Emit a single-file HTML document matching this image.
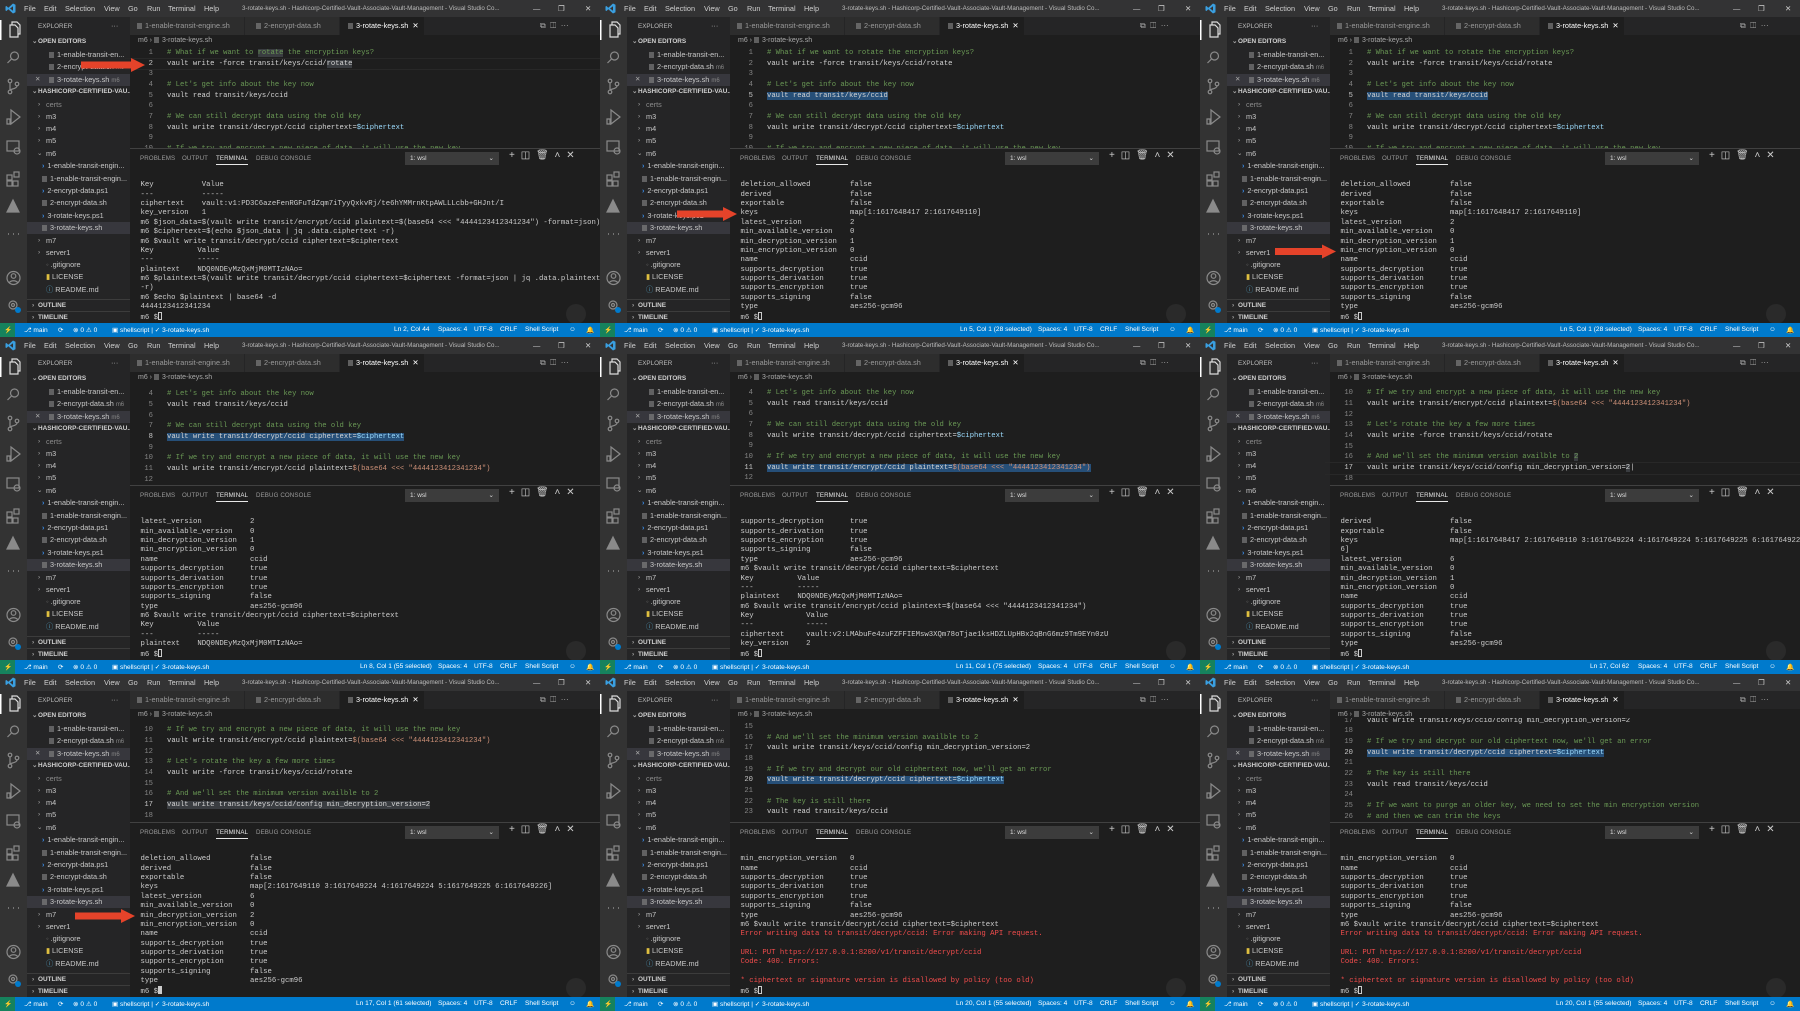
<!DOCTYPE html>
<html><head><meta charset="utf-8">
<style>
*{margin:0;padding:0;box-sizing:border-box}
body{width:1800px;height:1011px;background:#1e1e1e;overflow:hidden;position:relative;font-family:"Liberation Sans",sans-serif}
.p{position:absolute;width:600px;height:337px;overflow:hidden;background:#1e1e1e}
.p>*{position:absolute}
.tb{left:0;top:0;width:600px;height:17px;background:#333334;color:#cfcfcf;font-size:7.3px}
.tb span{position:absolute;top:4px;white-space:nowrap}
.tb .tt{left:242px;font-size:6.2px;top:5px;color:#bdbdbd}
.ab{left:0;top:17px;width:27px;height:306px;background:#333}
.sb{left:27px;top:17px;width:103px;height:306px;background:#252526}
.s{position:absolute;left:0;width:103px;height:12px;line-height:12px;font-size:7.3px;color:#c8c8c8;white-space:nowrap;overflow:hidden}
.s.h{font-size:6.4px;font-weight:bold;color:#d0d0d0}
.s.sel{background:#37373d}
.s .c{position:absolute;left:5px;color:#aaa;font-size:6.5px}
.fi{display:inline-block;width:5px;height:6px;background:#8a8a8a;opacity:.6;margin-right:3px;vertical-align:-1px}
.ps{color:#3b8eea;font-weight:bold;margin-right:3px;font-size:7px}
.tabs{left:130px;top:17px;width:470px;height:18px;background:#252526}
.tab{position:absolute;top:0;height:18px;line-height:18px;font-size:7.3px;color:#9a9a9a;background:#2d2d2d;white-space:nowrap;border-right:1px solid #252526}
.tab.a{background:#1e1e1e;color:#fff}
.bc{left:138px;top:37px;font-size:7px;color:#a9a9a9;white-space:nowrap}
.ed{left:125px;top:44px;width:475px;height:104px;overflow:hidden}
.ei{position:absolute;left:0;width:475px}
.l{position:relative;height:10.67px;line-height:10.67px;font-family:"Liberation Mono",monospace;font-size:7.2px;color:#d4d4d4}
.l i{position:absolute;left:0;width:28px;text-align:right;font-style:normal;color:#858585}
.l i.cur{color:#c6c6c6}
.l b{position:absolute;left:42px;font-weight:normal;white-space:pre}
.cm{color:#6a9955}.vr{color:#9cdcfe}.sr{color:#ce9178}
.hl{background:#264f78}.hs{background:#3a3d41}.hg{background:#3a3d41}
.pn{left:130px;top:148px;width:470px;height:175px;border-top:1px solid #414141;background:#1e1e1e}
.pt{position:absolute;top:6px;font-size:6.2px;color:#9a9a9a;letter-spacing:.1px}
.dd{position:absolute;left:275px;top:3px;width:94px;height:13px;background:#3c3c3c;font-size:6.5px;color:#ddd;line-height:13px;padding-left:5px}
.tm{left:140.5px;top:172px;font-family:"Liberation Mono",monospace;font-size:7.3px;color:#cccccc;white-space:pre;line-height:9.36px}
.er{color:#f14c4c}
.cu{display:inline-block;width:4px;height:8px;border:1px solid #ccc;vertical-align:-1px}
.st{left:0;top:323px;width:600px;height:14px;background:#007acc;color:#fff;font-size:6.6px}
.st span{position:absolute;top:3px;white-space:nowrap}
.st .rm{left:0;top:0;width:15px;height:14px;background:#16825d}
.arr{position:absolute;left:0;top:0}
</style></head><body>

<!-- PANEL 1 -->
<div class="p" style="left:0;top:0">
<div class="tb"><svg style="position:absolute;left:5px;top:3px" width="11" height="11" viewBox="0 0 11 11"><path d="M8 0.5L10.5 1.7V9.3L8 10.5L2.5 5.5L8 0.5ZM8 3.2L5 5.5L8 7.8Z M0.5 3.5L1.5 3L4 5.5L1.5 8L0.5 7.5Z" fill="#3a9fe0"/></svg><span style="left:24px">File</span><span style="left:44px">Edit</span><span style="left:65px">Selection</span><span style="left:104px">View</span><span style="left:128px">Go</span><span style="left:147px">Run</span><span style="left:168px">Terminal</span><span style="left:204px">Help</span><span class="tt">3-rotate-keys.sh - Hashicorp-Certified-Vault-Associate-Vault-Management - Visual Studio Co...</span><span style="left:533px">—</span><span style="left:558px">❐</span><span style="left:585px">✕</span></div>
<svg class="ab" width="27" height="306" viewBox="0 17 27 306" fill="none" stroke="#8a8a8a" stroke-width="1.2"><rect x="0" y="20" width="1.5" height="20" fill="#fff" stroke="none"/><path d="M10 25h5l3 3v9h-8z M12 25v-3h5l3 3v9h-2" stroke="#dcdcdc"/><circle cx="14.5" cy="56" r="4"/><path d="M11.5 59l-4 4"/><circle cx="10" cy="81" r="1.8"/><circle cx="10" cy="92" r="1.8"/><circle cx="17" cy="84" r="1.8"/><path d="M10 83v7M17 86c0 3-7 3-7 4"/><path d="M11 110l9 7-9 7z M7 119h3v5h-3z"/><rect x="7" y="141" width="12" height="10"/><circle cx="17" cy="151" r="3"/><rect x="7" y="175" width="5" height="5"/><rect x="7" y="181" width="5" height="5"/><rect x="13" y="181" width="5" height="5"/><rect x="14" y="172" width="5" height="5"/><path d="M7 212l6-12 6 12z" fill="#8a8a8a"/><path d="M8 234h1M13 234h1M18 234h1" stroke-width="1.6"/><circle cx="13.5" cy="278" r="6.5"/><circle cx="13.5" cy="276" r="2.3"/><path d="M9 283c2-3 7-3 9 0"/><circle cx="13" cy="305" r="4"/><circle cx="13" cy="305" r="1.5"/><circle cx="18" cy="310" r="3" fill="#007acc" stroke="none"/></svg>
<div class="sb">
<div class="s" style="top:4px;left:11px;font-size:6.3px;color:#bbb">EXPLORER</div><div class="s" style="top:3px;left:84px;width:20px;color:#bbb">···</div>
<div class="s h" style="top:19px"><span class="c">⌄</span><span style="margin-left:11px">OPEN EDITORS</span></div>
<div class="s" style="top:32px;padding-left:22px"><span class="fi"></span>1-enable-transit-en...</div>
<div class="s" style="top:44px;padding-left:22px"><span class="fi"></span>2-encrypt-data.sh <span style="color:#888;font-size:6px">m6</span></div>
<div class="s sel" style="top:57px;padding-left:22px"><span class="c" style="left:8px">✕</span><span class="fi"></span>3-rotate-keys.sh <span style="color:#888;font-size:6px">m6</span></div>
<div class="s h" style="top:69px"><span class="c">⌄</span><span style="margin-left:11px">HASHICORP-CERTIFIED-VAU...</span></div>
<div class="s" style="top:82px;padding-left:19px;color:#8b8b8b"><span class="c" style="left:11px">›</span>certs</div>
<div class="s" style="top:94px;padding-left:19px"><span class="c" style="left:11px">›</span>m3</div>
<div class="s" style="top:106px;padding-left:19px"><span class="c" style="left:11px">›</span>m4</div>
<div class="s" style="top:118px;padding-left:19px"><span class="c" style="left:11px">›</span>m5</div>
<div class="s" style="top:131px;padding-left:19px"><span class="c" style="left:10px">⌄</span>m6</div>
<div class="s" style="top:143px;padding-left:15px"><span class="ps">›</span>1-enable-transit-engin...</div>
<div class="s" style="top:156px;padding-left:15px"><span class="fi"></span>1-enable-transit-engin...</div>
<div class="s" style="top:168px;padding-left:15px"><span class="ps">›</span>2-encrypt-data.ps1</div>
<div class="s" style="top:180px;padding-left:15px"><span class="fi"></span>2-encrypt-data.sh</div>
<div class="s" style="top:193px;padding-left:15px"><span class="ps">›</span>3-rotate-keys.ps1</div>
<div class="s sel" style="top:205px;padding-left:15px"><span class="fi"></span>3-rotate-keys.sh</div>
<div class="s" style="top:218px;padding-left:19px"><span class="c" style="left:11px">›</span>m7</div>
<div class="s" style="top:230px;padding-left:19px"><span class="c" style="left:11px">›</span>server1</div>
<div class="s" style="top:242px;padding-left:19px"><span style="color:#666;margin-right:2px">◦</span>.gitignore</div>
<div class="s" style="top:254px;padding-left:19px"><span style="color:#e0c040;margin-right:2px">▮</span>LICENSE</div>
<div class="s" style="top:267px;padding-left:19px"><span style="color:#519aba;margin-right:2px">ⓘ</span>README.md</div>
<div class="s h" style="top:282px;border-top:1px solid #3c3c3c"><span class="c">›</span><span style="margin-left:11px">OUTLINE</span></div>
<div class="s h" style="top:294px;border-top:1px solid #3c3c3c"><span class="c">›</span><span style="margin-left:11px">TIMELINE</span></div>
</div>
<div class="tabs"><div class="tab" style="left:0;width:115px;padding-left:7px"><span class="fi"></span>1-enable-transit-engine.sh</div><div class="tab" style="left:115px;width:95px;padding-left:11px"><span class="fi"></span>2-encrypt-data.sh</div><div class="tab a" style="left:210px;width:85px;padding-left:8px"><span class="fi"></span>3-rotate-keys.sh <span style="margin-left:2px">✕</span></div><div class="tab" style="left:410px;background:none;color:#aaa;font-size:8px">⧉ &nbsp;◫ &nbsp;···</div></div>
<div class="bc">m6 › <span class="fi"></span>3-rotate-keys.sh</div>
<div class="ed"><div class="ei" style="top:4px">
<div class="l"><i>1</i><b class="cm"># What if we want to <span class="hs">rotate</span> the encryption keys?</b></div>
<div class="l" style="outline:1px solid #282828"><i class="cur">2</i><b>vault write -force transit/keys/ccid/<span class="hs">rotate</span></b></div>
<div class="l"><i>3</i><b></b></div>
<div class="l"><i>4</i><b class="cm"># Let's get info about the key now</b></div>
<div class="l"><i>5</i><b>vault read transit/keys/ccid</b></div>
<div class="l"><i>6</i><b></b></div>
<div class="l"><i>7</i><b class="cm"># We can still decrypt data using the old key</b></div>
<div class="l"><i>8</i><b>vault write transit/decrypt/ccid ciphertext=<span class="vr">$ciphertext</span></b></div>
<div class="l"><i>9</i><b></b></div>
<div class="l"><i>10</i><b class="cm"># If we try and encrypt a new piece of data, it will use the new key</b></div>
</div></div>
<div class="pn"><span class="pt" style="left:10px">PROBLEMS</span><span class="pt" style="left:52px">OUTPUT</span><span class="pt" style="left:86px;color:#e7e7e7;border-bottom:1px solid #e7e7e7;padding-bottom:2px">TERMINAL</span><span class="pt" style="left:126px">DEBUG CONSOLE</span><div class="dd">1: wsl<span style="position:absolute;right:5px">⌄</span></div><span class="pt" style="left:379px;font-size:10px;top:1px;color:#ccc">+ &nbsp;◫ &nbsp;🗑 &nbsp;˄ &nbsp;✕</span></div>
<div class="tm">
Key           Value
---           -----
ciphertext    vault:v1:PD3C6azeFenRGFuTdZqm7iTyyQxkvRj/te6hYMMrnKtpAWLLLcbb+GHJnt/I
key_version   1
m6 $json_data=$(vault write transit/encrypt/ccid plaintext=$(base64 &lt;&lt;&lt; "4444123412341234") -format=json)
m6 $ciphertext=$(echo $json_data | jq .data.ciphertext -r)
m6 $vault write transit/decrypt/ccid ciphertext=$ciphertext
Key          Value
---          -----
plaintext    NDQ0NDEyMzQxMjM0MTIzNAo=
m6 $plaintext=$(vault write transit/decrypt/ccid ciphertext=$ciphertext -format=json | jq .data.plaintext
-r)
m6 $echo $plaintext | base64 -d
4444123412341234
m6 $<span class="cu"></span></div>
<svg class="arr" width="600" height="337"><circle cx="576" cy="314" r="10" fill="#2a2a2a"/><polygon points="81,61.5 131,61.5 131,58 145,65 131,72 131,68.5 81,68.5" fill="#e5432a"/></svg>
<div class="st"><div class="rm" style="position:absolute"></div><span style="left:4px">⚡</span><span style="left:24px">⎇ main</span><span style="left:58px">⟳</span><span style="left:73px">⊗ 0 ⚠ 0</span><span style="left:112px">▣ shellscript | ✓ 3-rotate-keys.sh</span><span style="left:394px">Ln 2, Col 44</span><span style="left:438px">Spaces: 4</span><span style="left:474px">UTF-8</span><span style="left:500px">CRLF</span><span style="left:525px">Shell Script</span><span style="left:569px">☺</span><span style="left:586px">🔔</span></div>
</div>

<!-- PANEL 2 -->
<div class="p" style="left:600px;top:0">
<div class="tb"><svg style="position:absolute;left:5px;top:3px" width="11" height="11" viewBox="0 0 11 11"><path d="M8 0.5L10.5 1.7V9.3L8 10.5L2.5 5.5L8 0.5ZM8 3.2L5 5.5L8 7.8Z M0.5 3.5L1.5 3L4 5.5L1.5 8L0.5 7.5Z" fill="#3a9fe0"/></svg><span style="left:24px">File</span><span style="left:44px">Edit</span><span style="left:65px">Selection</span><span style="left:104px">View</span><span style="left:128px">Go</span><span style="left:147px">Run</span><span style="left:168px">Terminal</span><span style="left:204px">Help</span><span class="tt">3-rotate-keys.sh - Hashicorp-Certified-Vault-Associate-Vault-Management - Visual Studio Co...</span><span style="left:533px">—</span><span style="left:558px">❐</span><span style="left:585px">✕</span></div>
<svg class="ab" width="27" height="306" viewBox="0 17 27 306" fill="none" stroke="#8a8a8a" stroke-width="1.2"><rect x="0" y="20" width="1.5" height="20" fill="#fff" stroke="none"/><path d="M10 25h5l3 3v9h-8z M12 25v-3h5l3 3v9h-2" stroke="#dcdcdc"/><circle cx="14.5" cy="56" r="4"/><path d="M11.5 59l-4 4"/><circle cx="10" cy="81" r="1.8"/><circle cx="10" cy="92" r="1.8"/><circle cx="17" cy="84" r="1.8"/><path d="M10 83v7M17 86c0 3-7 3-7 4"/><path d="M11 110l9 7-9 7z M7 119h3v5h-3z"/><rect x="7" y="141" width="12" height="10"/><circle cx="17" cy="151" r="3"/><rect x="7" y="175" width="5" height="5"/><rect x="7" y="181" width="5" height="5"/><rect x="13" y="181" width="5" height="5"/><rect x="14" y="172" width="5" height="5"/><path d="M7 212l6-12 6 12z" fill="#8a8a8a"/><path d="M8 234h1M13 234h1M18 234h1" stroke-width="1.6"/><circle cx="13.5" cy="278" r="6.5"/><circle cx="13.5" cy="276" r="2.3"/><path d="M9 283c2-3 7-3 9 0"/><circle cx="13" cy="305" r="4"/><circle cx="13" cy="305" r="1.5"/><circle cx="18" cy="310" r="3" fill="#007acc" stroke="none"/></svg>
<div class="sb">
<div class="s" style="top:4px;left:11px;font-size:6.3px;color:#bbb">EXPLORER</div><div class="s" style="top:3px;left:84px;width:20px;color:#bbb">···</div>
<div class="s h" style="top:19px"><span class="c">⌄</span><span style="margin-left:11px">OPEN EDITORS</span></div>
<div class="s" style="top:32px;padding-left:22px"><span class="fi"></span>1-enable-transit-en...</div>
<div class="s" style="top:44px;padding-left:22px"><span class="fi"></span>2-encrypt-data.sh <span style="color:#888;font-size:6px">m6</span></div>
<div class="s sel" style="top:57px;padding-left:22px"><span class="c" style="left:8px">✕</span><span class="fi"></span>3-rotate-keys.sh <span style="color:#888;font-size:6px">m6</span></div>
<div class="s h" style="top:69px"><span class="c">⌄</span><span style="margin-left:11px">HASHICORP-CERTIFIED-VAU...</span></div>
<div class="s" style="top:82px;padding-left:19px;color:#8b8b8b"><span class="c" style="left:11px">›</span>certs</div>
<div class="s" style="top:94px;padding-left:19px"><span class="c" style="left:11px">›</span>m3</div>
<div class="s" style="top:106px;padding-left:19px"><span class="c" style="left:11px">›</span>m4</div>
<div class="s" style="top:118px;padding-left:19px"><span class="c" style="left:11px">›</span>m5</div>
<div class="s" style="top:131px;padding-left:19px"><span class="c" style="left:10px">⌄</span>m6</div>
<div class="s" style="top:143px;padding-left:15px"><span class="ps">›</span>1-enable-transit-engin...</div>
<div class="s" style="top:156px;padding-left:15px"><span class="fi"></span>1-enable-transit-engin...</div>
<div class="s" style="top:168px;padding-left:15px"><span class="ps">›</span>2-encrypt-data.ps1</div>
<div class="s" style="top:180px;padding-left:15px"><span class="fi"></span>2-encrypt-data.sh</div>
<div class="s" style="top:193px;padding-left:15px"><span class="ps">›</span>3-rotate-keys.ps1</div>
<div class="s sel" style="top:205px;padding-left:15px"><span class="fi"></span>3-rotate-keys.sh</div>
<div class="s" style="top:218px;padding-left:19px"><span class="c" style="left:11px">›</span>m7</div>
<div class="s" style="top:230px;padding-left:19px"><span class="c" style="left:11px">›</span>server1</div>
<div class="s" style="top:242px;padding-left:19px"><span style="color:#666;margin-right:2px">◦</span>.gitignore</div>
<div class="s" style="top:254px;padding-left:19px"><span style="color:#e0c040;margin-right:2px">▮</span>LICENSE</div>
<div class="s" style="top:267px;padding-left:19px"><span style="color:#519aba;margin-right:2px">ⓘ</span>README.md</div>
<div class="s h" style="top:282px;border-top:1px solid #3c3c3c"><span class="c">›</span><span style="margin-left:11px">OUTLINE</span></div>
<div class="s h" style="top:294px;border-top:1px solid #3c3c3c"><span class="c">›</span><span style="margin-left:11px">TIMELINE</span></div>
</div>
<div class="tabs"><div class="tab" style="left:0;width:115px;padding-left:7px"><span class="fi"></span>1-enable-transit-engine.sh</div><div class="tab" style="left:115px;width:95px;padding-left:11px"><span class="fi"></span>2-encrypt-data.sh</div><div class="tab a" style="left:210px;width:85px;padding-left:8px"><span class="fi"></span>3-rotate-keys.sh <span style="margin-left:2px">✕</span></div><div class="tab" style="left:410px;background:none;color:#aaa;font-size:8px">⧉ &nbsp;◫ &nbsp;···</div></div>
<div class="bc">m6 › <span class="fi"></span>3-rotate-keys.sh</div>
<div class="ed"><div class="ei" style="top:4px">
<div class="l"><i>1</i><b class="cm"># What if we want to rotate the encryption keys?</b></div>
<div class="l"><i>2</i><b>vault write -force transit/keys/ccid/rotate</b></div>
<div class="l"><i>3</i><b></b></div>
<div class="l"><i>4</i><b class="cm"># Let's get info about the key now</b></div>
<div class="l"><i class="cur">5</i><b><span class="hl">vault read transit/keys/ccid</span></b></div>
<div class="l"><i>6</i><b></b></div>
<div class="l"><i>7</i><b class="cm"># We can still decrypt data using the old key</b></div>
<div class="l"><i>8</i><b>vault write transit/decrypt/ccid ciphertext=<span class="vr">$ciphertext</span></b></div>
<div class="l"><i>9</i><b></b></div>
<div class="l"><i>10</i><b class="cm"># If we try and encrypt a new piece of data, it will use the new key</b></div>
</div></div>
<div class="pn"><span class="pt" style="left:10px">PROBLEMS</span><span class="pt" style="left:52px">OUTPUT</span><span class="pt" style="left:86px;color:#e7e7e7;border-bottom:1px solid #e7e7e7;padding-bottom:2px">TERMINAL</span><span class="pt" style="left:126px">DEBUG CONSOLE</span><div class="dd">1: wsl<span style="position:absolute;right:5px">⌄</span></div><span class="pt" style="left:379px;font-size:10px;top:1px;color:#ccc">+ &nbsp;◫ &nbsp;🗑 &nbsp;˄ &nbsp;✕</span></div>
<div class="tm">
deletion_allowed         false
derived                  false
exportable               false
keys                     map[1:1617648417 2:1617649110]
latest_version           2
min_available_version    0
min_decryption_version   1
min_encryption_version   0
name                     ccid
supports_decryption      true
supports_derivation      true
supports_encryption      true
supports_signing         false
type                     aes256-gcm96
m6 $<span class="cu"></span></div>
<svg class="arr" width="600" height="337"><circle cx="576" cy="314" r="10" fill="#2a2a2a"/><polygon points="77,210.5 123,210.5 123,207 137,214 123,221 123,217.5 77,217.5" fill="#e5432a"/></svg>
<div class="st"><div class="rm" style="position:absolute"></div><span style="left:4px">⚡</span><span style="left:24px">⎇ main</span><span style="left:58px">⟳</span><span style="left:73px">⊗ 0 ⚠ 0</span><span style="left:112px">▣ shellscript | ✓ 3-rotate-keys.sh</span><span style="left:360px">Ln 5, Col 1 (28 selected)</span><span style="left:438px">Spaces: 4</span><span style="left:474px">UTF-8</span><span style="left:500px">CRLF</span><span style="left:525px">Shell Script</span><span style="left:569px">☺</span><span style="left:586px">🔔</span></div>
</div>

<!-- PANEL 3 -->
<div class="p" style="left:1200px;top:0">
<div class="tb"><svg style="position:absolute;left:5px;top:3px" width="11" height="11" viewBox="0 0 11 11"><path d="M8 0.5L10.5 1.7V9.3L8 10.5L2.5 5.5L8 0.5ZM8 3.2L5 5.5L8 7.8Z M0.5 3.5L1.5 3L4 5.5L1.5 8L0.5 7.5Z" fill="#3a9fe0"/></svg><span style="left:24px">File</span><span style="left:44px">Edit</span><span style="left:65px">Selection</span><span style="left:104px">View</span><span style="left:128px">Go</span><span style="left:147px">Run</span><span style="left:168px">Terminal</span><span style="left:204px">Help</span><span class="tt">3-rotate-keys.sh - Hashicorp-Certified-Vault-Associate-Vault-Management - Visual Studio Co...</span><span style="left:533px">—</span><span style="left:558px">❐</span><span style="left:585px">✕</span></div>
<svg class="ab" width="27" height="306" viewBox="0 17 27 306" fill="none" stroke="#8a8a8a" stroke-width="1.2"><rect x="0" y="20" width="1.5" height="20" fill="#fff" stroke="none"/><path d="M10 25h5l3 3v9h-8z M12 25v-3h5l3 3v9h-2" stroke="#dcdcdc"/><circle cx="14.5" cy="56" r="4"/><path d="M11.5 59l-4 4"/><circle cx="10" cy="81" r="1.8"/><circle cx="10" cy="92" r="1.8"/><circle cx="17" cy="84" r="1.8"/><path d="M10 83v7M17 86c0 3-7 3-7 4"/><path d="M11 110l9 7-9 7z M7 119h3v5h-3z"/><rect x="7" y="141" width="12" height="10"/><circle cx="17" cy="151" r="3"/><rect x="7" y="175" width="5" height="5"/><rect x="7" y="181" width="5" height="5"/><rect x="13" y="181" width="5" height="5"/><rect x="14" y="172" width="5" height="5"/><path d="M7 212l6-12 6 12z" fill="#8a8a8a"/><path d="M8 234h1M13 234h1M18 234h1" stroke-width="1.6"/><circle cx="13.5" cy="278" r="6.5"/><circle cx="13.5" cy="276" r="2.3"/><path d="M9 283c2-3 7-3 9 0"/><circle cx="13" cy="305" r="4"/><circle cx="13" cy="305" r="1.5"/><circle cx="18" cy="310" r="3" fill="#007acc" stroke="none"/></svg>
<div class="sb">
<div class="s" style="top:4px;left:11px;font-size:6.3px;color:#bbb">EXPLORER</div><div class="s" style="top:3px;left:84px;width:20px;color:#bbb">···</div>
<div class="s h" style="top:19px"><span class="c">⌄</span><span style="margin-left:11px">OPEN EDITORS</span></div>
<div class="s" style="top:32px;padding-left:22px"><span class="fi"></span>1-enable-transit-en...</div>
<div class="s" style="top:44px;padding-left:22px"><span class="fi"></span>2-encrypt-data.sh <span style="color:#888;font-size:6px">m6</span></div>
<div class="s sel" style="top:57px;padding-left:22px"><span class="c" style="left:8px">✕</span><span class="fi"></span>3-rotate-keys.sh <span style="color:#888;font-size:6px">m6</span></div>
<div class="s h" style="top:69px"><span class="c">⌄</span><span style="margin-left:11px">HASHICORP-CERTIFIED-VAU...</span></div>
<div class="s" style="top:82px;padding-left:19px;color:#8b8b8b"><span class="c" style="left:11px">›</span>certs</div>
<div class="s" style="top:94px;padding-left:19px"><span class="c" style="left:11px">›</span>m3</div>
<div class="s" style="top:106px;padding-left:19px"><span class="c" style="left:11px">›</span>m4</div>
<div class="s" style="top:118px;padding-left:19px"><span class="c" style="left:11px">›</span>m5</div>
<div class="s" style="top:131px;padding-left:19px"><span class="c" style="left:10px">⌄</span>m6</div>
<div class="s" style="top:143px;padding-left:15px"><span class="ps">›</span>1-enable-transit-engin...</div>
<div class="s" style="top:156px;padding-left:15px"><span class="fi"></span>1-enable-transit-engin...</div>
<div class="s" style="top:168px;padding-left:15px"><span class="ps">›</span>2-encrypt-data.ps1</div>
<div class="s" style="top:180px;padding-left:15px"><span class="fi"></span>2-encrypt-data.sh</div>
<div class="s" style="top:193px;padding-left:15px"><span class="ps">›</span>3-rotate-keys.ps1</div>
<div class="s sel" style="top:205px;padding-left:15px"><span class="fi"></span>3-rotate-keys.sh</div>
<div class="s" style="top:218px;padding-left:19px"><span class="c" style="left:11px">›</span>m7</div>
<div class="s" style="top:230px;padding-left:19px"><span class="c" style="left:11px">›</span>server1</div>
<div class="s" style="top:242px;padding-left:19px"><span style="color:#666;margin-right:2px">◦</span>.gitignore</div>
<div class="s" style="top:254px;padding-left:19px"><span style="color:#e0c040;margin-right:2px">▮</span>LICENSE</div>
<div class="s" style="top:267px;padding-left:19px"><span style="color:#519aba;margin-right:2px">ⓘ</span>README.md</div>
<div class="s h" style="top:282px;border-top:1px solid #3c3c3c"><span class="c">›</span><span style="margin-left:11px">OUTLINE</span></div>
<div class="s h" style="top:294px;border-top:1px solid #3c3c3c"><span class="c">›</span><span style="margin-left:11px">TIMELINE</span></div>
</div>
<div class="tabs"><div class="tab" style="left:0;width:115px;padding-left:7px"><span class="fi"></span>1-enable-transit-engine.sh</div><div class="tab" style="left:115px;width:95px;padding-left:11px"><span class="fi"></span>2-encrypt-data.sh</div><div class="tab a" style="left:210px;width:85px;padding-left:8px"><span class="fi"></span>3-rotate-keys.sh <span style="margin-left:2px">✕</span></div><div class="tab" style="left:410px;background:none;color:#aaa;font-size:8px">⧉ &nbsp;◫ &nbsp;···</div></div>
<div class="bc">m6 › <span class="fi"></span>3-rotate-keys.sh</div>
<div class="ed"><div class="ei" style="top:4px">
<div class="l"><i>1</i><b class="cm"># What if we want to rotate the encryption keys?</b></div>
<div class="l"><i>2</i><b>vault write -force transit/keys/ccid/rotate</b></div>
<div class="l"><i>3</i><b></b></div>
<div class="l"><i>4</i><b class="cm"># Let's get info about the key now</b></div>
<div class="l"><i class="cur">5</i><b><span class="hl">vault read transit/keys/ccid</span></b></div>
<div class="l"><i>6</i><b></b></div>
<div class="l"><i>7</i><b class="cm"># We can still decrypt data using the old key</b></div>
<div class="l"><i>8</i><b>vault write transit/decrypt/ccid ciphertext=<span class="vr">$ciphertext</span></b></div>
<div class="l"><i>9</i><b></b></div>
<div class="l"><i>10</i><b class="cm"># If we try and encrypt a new piece of data, it will use the new key</b></div>
</div></div>
<div class="pn"><span class="pt" style="left:10px">PROBLEMS</span><span class="pt" style="left:52px">OUTPUT</span><span class="pt" style="left:86px;color:#e7e7e7;border-bottom:1px solid #e7e7e7;padding-bottom:2px">TERMINAL</span><span class="pt" style="left:126px">DEBUG CONSOLE</span><div class="dd">1: wsl<span style="position:absolute;right:5px">⌄</span></div><span class="pt" style="left:379px;font-size:10px;top:1px;color:#ccc">+ &nbsp;◫ &nbsp;🗑 &nbsp;˄ &nbsp;✕</span></div>
<div class="tm">
deletion_allowed         false
derived                  false
exportable               false
keys                     map[1:1617648417 2:1617649110]
latest_version           2
min_available_version    0
min_decryption_version   1
min_encryption_version   0
name                     ccid
supports_decryption      true
supports_derivation      true
supports_encryption      true
supports_signing         false
type                     aes256-gcm96
m6 $<span class="cu"></span></div>
<svg class="arr" width="600" height="337"><circle cx="576" cy="314" r="10" fill="#2a2a2a"/><polygon points="75,248 122,248 122,244.5 136,251.5 122,258.5 122,255 75,255" fill="#e5432a"/></svg>
<div class="st"><div class="rm" style="position:absolute"></div><span style="left:4px">⚡</span><span style="left:24px">⎇ main</span><span style="left:58px">⟳</span><span style="left:73px">⊗ 0 ⚠ 0</span><span style="left:112px">▣ shellscript | ✓ 3-rotate-keys.sh</span><span style="left:360px">Ln 5, Col 1 (28 selected)</span><span style="left:438px">Spaces: 4</span><span style="left:474px">UTF-8</span><span style="left:500px">CRLF</span><span style="left:525px">Shell Script</span><span style="left:569px">☺</span><span style="left:586px">🔔</span></div>
</div>

<!-- PANEL 4 -->
<div class="p" style="left:0;top:337px">
<div class="tb"><svg style="position:absolute;left:5px;top:3px" width="11" height="11" viewBox="0 0 11 11"><path d="M8 0.5L10.5 1.7V9.3L8 10.5L2.5 5.5L8 0.5ZM8 3.2L5 5.5L8 7.8Z M0.5 3.5L1.5 3L4 5.5L1.5 8L0.5 7.5Z" fill="#3a9fe0"/></svg><span style="left:24px">File</span><span style="left:44px">Edit</span><span style="left:65px">Selection</span><span style="left:104px">View</span><span style="left:128px">Go</span><span style="left:147px">Run</span><span style="left:168px">Terminal</span><span style="left:204px">Help</span><span class="tt">3-rotate-keys.sh - Hashicorp-Certified-Vault-Associate-Vault-Management - Visual Studio Co...</span><span style="left:533px">—</span><span style="left:558px">❐</span><span style="left:585px">✕</span></div>
<svg class="ab" width="27" height="306" viewBox="0 17 27 306" fill="none" stroke="#8a8a8a" stroke-width="1.2"><rect x="0" y="20" width="1.5" height="20" fill="#fff" stroke="none"/><path d="M10 25h5l3 3v9h-8z M12 25v-3h5l3 3v9h-2" stroke="#dcdcdc"/><circle cx="14.5" cy="56" r="4"/><path d="M11.5 59l-4 4"/><circle cx="10" cy="81" r="1.8"/><circle cx="10" cy="92" r="1.8"/><circle cx="17" cy="84" r="1.8"/><path d="M10 83v7M17 86c0 3-7 3-7 4"/><path d="M11 110l9 7-9 7z M7 119h3v5h-3z"/><rect x="7" y="141" width="12" height="10"/><circle cx="17" cy="151" r="3"/><rect x="7" y="175" width="5" height="5"/><rect x="7" y="181" width="5" height="5"/><rect x="13" y="181" width="5" height="5"/><rect x="14" y="172" width="5" height="5"/><path d="M7 212l6-12 6 12z" fill="#8a8a8a"/><path d="M8 234h1M13 234h1M18 234h1" stroke-width="1.6"/><circle cx="13.5" cy="278" r="6.5"/><circle cx="13.5" cy="276" r="2.3"/><path d="M9 283c2-3 7-3 9 0"/><circle cx="13" cy="305" r="4"/><circle cx="13" cy="305" r="1.5"/><circle cx="18" cy="310" r="3" fill="#007acc" stroke="none"/></svg>
<div class="sb">
<div class="s" style="top:4px;left:11px;font-size:6.3px;color:#bbb">EXPLORER</div><div class="s" style="top:3px;left:84px;width:20px;color:#bbb">···</div>
<div class="s h" style="top:19px"><span class="c">⌄</span><span style="margin-left:11px">OPEN EDITORS</span></div>
<div class="s" style="top:32px;padding-left:22px"><span class="fi"></span>1-enable-transit-en...</div>
<div class="s" style="top:44px;padding-left:22px"><span class="fi"></span>2-encrypt-data.sh <span style="color:#888;font-size:6px">m6</span></div>
<div class="s sel" style="top:57px;padding-left:22px"><span class="c" style="left:8px">✕</span><span class="fi"></span>3-rotate-keys.sh <span style="color:#888;font-size:6px">m6</span></div>
<div class="s h" style="top:69px"><span class="c">⌄</span><span style="margin-left:11px">HASHICORP-CERTIFIED-VAU...</span></div>
<div class="s" style="top:82px;padding-left:19px;color:#8b8b8b"><span class="c" style="left:11px">›</span>certs</div>
<div class="s" style="top:94px;padding-left:19px"><span class="c" style="left:11px">›</span>m3</div>
<div class="s" style="top:106px;padding-left:19px"><span class="c" style="left:11px">›</span>m4</div>
<div class="s" style="top:118px;padding-left:19px"><span class="c" style="left:11px">›</span>m5</div>
<div class="s" style="top:131px;padding-left:19px"><span class="c" style="left:10px">⌄</span>m6</div>
<div class="s" style="top:143px;padding-left:15px"><span class="ps">›</span>1-enable-transit-engin...</div>
<div class="s" style="top:156px;padding-left:15px"><span class="fi"></span>1-enable-transit-engin...</div>
<div class="s" style="top:168px;padding-left:15px"><span class="ps">›</span>2-encrypt-data.ps1</div>
<div class="s" style="top:180px;padding-left:15px"><span class="fi"></span>2-encrypt-data.sh</div>
<div class="s" style="top:193px;padding-left:15px"><span class="ps">›</span>3-rotate-keys.ps1</div>
<div class="s sel" style="top:205px;padding-left:15px"><span class="fi"></span>3-rotate-keys.sh</div>
<div class="s" style="top:218px;padding-left:19px"><span class="c" style="left:11px">›</span>m7</div>
<div class="s" style="top:230px;padding-left:19px"><span class="c" style="left:11px">›</span>server1</div>
<div class="s" style="top:242px;padding-left:19px"><span style="color:#666;margin-right:2px">◦</span>.gitignore</div>
<div class="s" style="top:254px;padding-left:19px"><span style="color:#e0c040;margin-right:2px">▮</span>LICENSE</div>
<div class="s" style="top:267px;padding-left:19px"><span style="color:#519aba;margin-right:2px">ⓘ</span>README.md</div>
<div class="s h" style="top:282px;border-top:1px solid #3c3c3c"><span class="c">›</span><span style="margin-left:11px">OUTLINE</span></div>
<div class="s h" style="top:294px;border-top:1px solid #3c3c3c"><span class="c">›</span><span style="margin-left:11px">TIMELINE</span></div>
</div>
<div class="tabs"><div class="tab" style="left:0;width:115px;padding-left:7px"><span class="fi"></span>1-enable-transit-engine.sh</div><div class="tab" style="left:115px;width:95px;padding-left:11px"><span class="fi"></span>2-encrypt-data.sh</div><div class="tab a" style="left:210px;width:85px;padding-left:8px"><span class="fi"></span>3-rotate-keys.sh <span style="margin-left:2px">✕</span></div><div class="tab" style="left:410px;background:none;color:#aaa;font-size:8px">⧉ &nbsp;◫ &nbsp;···</div></div>
<div class="bc">m6 › <span class="fi"></span>3-rotate-keys.sh</div>
<div class="ed"><div class="ei" style="top:8.4px">
<div class="l"><i>4</i><b class="cm"># Let's get info about the key now</b></div>
<div class="l"><i>5</i><b>vault read transit/keys/ccid</b></div>
<div class="l"><i>6</i><b></b></div>
<div class="l"><i>7</i><b class="cm"># We can still decrypt data using the old key</b></div>
<div class="l"><i class="cur">8</i><b><span class="hl">vault write transit/decrypt/ccid ciphertext=<span class="vr">$ciphertext</span></span></b></div>
<div class="l"><i>9</i><b></b></div>
<div class="l"><i>10</i><b class="cm"># If we try and encrypt a new piece of data, it will use the new key</b></div>
<div class="l"><i>11</i><b>vault write transit/encrypt/ccid plaintext=<span class="sr">$(base64 &lt;&lt;&lt; "4444123412341234")</span></b></div>
<div class="l"><i>12</i><b></b></div>
</div></div>
<div class="pn"><span class="pt" style="left:10px">PROBLEMS</span><span class="pt" style="left:52px">OUTPUT</span><span class="pt" style="left:86px;color:#e7e7e7;border-bottom:1px solid #e7e7e7;padding-bottom:2px">TERMINAL</span><span class="pt" style="left:126px">DEBUG CONSOLE</span><div class="dd">1: wsl<span style="position:absolute;right:5px">⌄</span></div><span class="pt" style="left:379px;font-size:10px;top:1px;color:#ccc">+ &nbsp;◫ &nbsp;🗑 &nbsp;˄ &nbsp;✕</span></div>
<div class="tm">
latest_version           2
min_available_version    0
min_decryption_version   1
min_encryption_version   0
name                     ccid
supports_decryption      true
supports_derivation      true
supports_encryption      true
supports_signing         false
type                     aes256-gcm96
m6 $vault write transit/decrypt/ccid ciphertext=$ciphertext
Key          Value
---          -----
plaintext    NDQ0NDEyMzQxMjM0MTIzNAo=
m6 $<span class="cu"></span></div>
<svg class="arr" width="600" height="337"><circle cx="576" cy="314" r="10" fill="#2a2a2a"/></svg>
<div class="st"><div class="rm" style="position:absolute"></div><span style="left:4px">⚡</span><span style="left:24px">⎇ main</span><span style="left:58px">⟳</span><span style="left:73px">⊗ 0 ⚠ 0</span><span style="left:112px">▣ shellscript | ✓ 3-rotate-keys.sh</span><span style="left:360px">Ln 8, Col 1 (55 selected)</span><span style="left:438px">Spaces: 4</span><span style="left:474px">UTF-8</span><span style="left:500px">CRLF</span><span style="left:525px">Shell Script</span><span style="left:569px">☺</span><span style="left:586px">🔔</span></div>
</div>

<!-- PANEL 5 -->
<div class="p" style="left:600px;top:337px">
<div class="tb"><svg style="position:absolute;left:5px;top:3px" width="11" height="11" viewBox="0 0 11 11"><path d="M8 0.5L10.5 1.7V9.3L8 10.5L2.5 5.5L8 0.5ZM8 3.2L5 5.5L8 7.8Z M0.5 3.5L1.5 3L4 5.5L1.5 8L0.5 7.5Z" fill="#3a9fe0"/></svg><span style="left:24px">File</span><span style="left:44px">Edit</span><span style="left:65px">Selection</span><span style="left:104px">View</span><span style="left:128px">Go</span><span style="left:147px">Run</span><span style="left:168px">Terminal</span><span style="left:204px">Help</span><span class="tt">3-rotate-keys.sh - Hashicorp-Certified-Vault-Associate-Vault-Management - Visual Studio Co...</span><span style="left:533px">—</span><span style="left:558px">❐</span><span style="left:585px">✕</span></div>
<svg class="ab" width="27" height="306" viewBox="0 17 27 306" fill="none" stroke="#8a8a8a" stroke-width="1.2"><rect x="0" y="20" width="1.5" height="20" fill="#fff" stroke="none"/><path d="M10 25h5l3 3v9h-8z M12 25v-3h5l3 3v9h-2" stroke="#dcdcdc"/><circle cx="14.5" cy="56" r="4"/><path d="M11.5 59l-4 4"/><circle cx="10" cy="81" r="1.8"/><circle cx="10" cy="92" r="1.8"/><circle cx="17" cy="84" r="1.8"/><path d="M10 83v7M17 86c0 3-7 3-7 4"/><path d="M11 110l9 7-9 7z M7 119h3v5h-3z"/><rect x="7" y="141" width="12" height="10"/><circle cx="17" cy="151" r="3"/><rect x="7" y="175" width="5" height="5"/><rect x="7" y="181" width="5" height="5"/><rect x="13" y="181" width="5" height="5"/><rect x="14" y="172" width="5" height="5"/><path d="M7 212l6-12 6 12z" fill="#8a8a8a"/><path d="M8 234h1M13 234h1M18 234h1" stroke-width="1.6"/><circle cx="13.5" cy="278" r="6.5"/><circle cx="13.5" cy="276" r="2.3"/><path d="M9 283c2-3 7-3 9 0"/><circle cx="13" cy="305" r="4"/><circle cx="13" cy="305" r="1.5"/><circle cx="18" cy="310" r="3" fill="#007acc" stroke="none"/></svg>
<div class="sb">
<div class="s" style="top:4px;left:11px;font-size:6.3px;color:#bbb">EXPLORER</div><div class="s" style="top:3px;left:84px;width:20px;color:#bbb">···</div>
<div class="s h" style="top:19px"><span class="c">⌄</span><span style="margin-left:11px">OPEN EDITORS</span></div>
<div class="s" style="top:32px;padding-left:22px"><span class="fi"></span>1-enable-transit-en...</div>
<div class="s" style="top:44px;padding-left:22px"><span class="fi"></span>2-encrypt-data.sh <span style="color:#888;font-size:6px">m6</span></div>
<div class="s sel" style="top:57px;padding-left:22px"><span class="c" style="left:8px">✕</span><span class="fi"></span>3-rotate-keys.sh <span style="color:#888;font-size:6px">m6</span></div>
<div class="s h" style="top:69px"><span class="c">⌄</span><span style="margin-left:11px">HASHICORP-CERTIFIED-VAU...</span></div>
<div class="s" style="top:82px;padding-left:19px;color:#8b8b8b"><span class="c" style="left:11px">›</span>certs</div>
<div class="s" style="top:94px;padding-left:19px"><span class="c" style="left:11px">›</span>m3</div>
<div class="s" style="top:106px;padding-left:19px"><span class="c" style="left:11px">›</span>m4</div>
<div class="s" style="top:118px;padding-left:19px"><span class="c" style="left:11px">›</span>m5</div>
<div class="s" style="top:131px;padding-left:19px"><span class="c" style="left:10px">⌄</span>m6</div>
<div class="s" style="top:143px;padding-left:15px"><span class="ps">›</span>1-enable-transit-engin...</div>
<div class="s" style="top:156px;padding-left:15px"><span class="fi"></span>1-enable-transit-engin...</div>
<div class="s" style="top:168px;padding-left:15px"><span class="ps">›</span>2-encrypt-data.ps1</div>
<div class="s" style="top:180px;padding-left:15px"><span class="fi"></span>2-encrypt-data.sh</div>
<div class="s" style="top:193px;padding-left:15px"><span class="ps">›</span>3-rotate-keys.ps1</div>
<div class="s sel" style="top:205px;padding-left:15px"><span class="fi"></span>3-rotate-keys.sh</div>
<div class="s" style="top:218px;padding-left:19px"><span class="c" style="left:11px">›</span>m7</div>
<div class="s" style="top:230px;padding-left:19px"><span class="c" style="left:11px">›</span>server1</div>
<div class="s" style="top:242px;padding-left:19px"><span style="color:#666;margin-right:2px">◦</span>.gitignore</div>
<div class="s" style="top:254px;padding-left:19px"><span style="color:#e0c040;margin-right:2px">▮</span>LICENSE</div>
<div class="s" style="top:267px;padding-left:19px"><span style="color:#519aba;margin-right:2px">ⓘ</span>README.md</div>
<div class="s h" style="top:282px;border-top:1px solid #3c3c3c"><span class="c">›</span><span style="margin-left:11px">OUTLINE</span></div>
<div class="s h" style="top:294px;border-top:1px solid #3c3c3c"><span class="c">›</span><span style="margin-left:11px">TIMELINE</span></div>
</div>
<div class="tabs"><div class="tab" style="left:0;width:115px;padding-left:7px"><span class="fi"></span>1-enable-transit-engine.sh</div><div class="tab" style="left:115px;width:95px;padding-left:11px"><span class="fi"></span>2-encrypt-data.sh</div><div class="tab a" style="left:210px;width:85px;padding-left:8px"><span class="fi"></span>3-rotate-keys.sh <span style="margin-left:2px">✕</span></div><div class="tab" style="left:410px;background:none;color:#aaa;font-size:8px">⧉ &nbsp;◫ &nbsp;···</div></div>
<div class="bc">m6 › <span class="fi"></span>3-rotate-keys.sh</div>
<div class="ed"><div class="ei" style="top:7px">
<div class="l"><i>4</i><b class="cm"># Let's get info about the key now</b></div>
<div class="l"><i>5</i><b>vault read transit/keys/ccid</b></div>
<div class="l"><i>6</i><b></b></div>
<div class="l"><i>7</i><b class="cm"># We can still decrypt data using the old key</b></div>
<div class="l"><i>8</i><b>vault write transit/decrypt/ccid ciphertext=<span class="vr">$ciphertext</span></b></div>
<div class="l"><i>9</i><b></b></div>
<div class="l"><i>10</i><b class="cm"># If we try and encrypt a new piece of data, it will use the new key</b></div>
<div class="l"><i class="cur">11</i><b><span class="hl">vault write transit/encrypt/ccid plaintext=<span class="sr">$(base64 &lt;&lt;&lt; "4444123412341234")</span></span></b></div>
<div class="l"><i>12</i><b></b></div>
</div></div>
<div class="pn"><span class="pt" style="left:10px">PROBLEMS</span><span class="pt" style="left:52px">OUTPUT</span><span class="pt" style="left:86px;color:#e7e7e7;border-bottom:1px solid #e7e7e7;padding-bottom:2px">TERMINAL</span><span class="pt" style="left:126px">DEBUG CONSOLE</span><div class="dd">1: wsl<span style="position:absolute;right:5px">⌄</span></div><span class="pt" style="left:379px;font-size:10px;top:1px;color:#ccc">+ &nbsp;◫ &nbsp;🗑 &nbsp;˄ &nbsp;✕</span></div>
<div class="tm">
supports_decryption      true
supports_derivation      true
supports_encryption      true
supports_signing         false
type                     aes256-gcm96
m6 $vault write transit/decrypt/ccid ciphertext=$ciphertext
Key          Value
---          -----
plaintext    NDQ0NDEyMzQxMjM0MTIzNAo=
m6 $vault write transit/encrypt/ccid plaintext=$(base64 &lt;&lt;&lt; "4444123412341234")
Key            Value
---            -----
ciphertext     vault:v2:LMAbuFe4zuFZFFIEMsw3XQm78oTjae1ksHDZLUpHBx2qBnG6mz9Tm9EYn0zU
key_version    2
m6 $<span class="cu"></span></div>
<svg class="arr" width="600" height="337"><circle cx="576" cy="314" r="10" fill="#2a2a2a"/></svg>
<div class="st"><div class="rm" style="position:absolute"></div><span style="left:4px">⚡</span><span style="left:24px">⎇ main</span><span style="left:58px">⟳</span><span style="left:73px">⊗ 0 ⚠ 0</span><span style="left:112px">▣ shellscript | ✓ 3-rotate-keys.sh</span><span style="left:356px">Ln 11, Col 1 (75 selected)</span><span style="left:438px">Spaces: 4</span><span style="left:474px">UTF-8</span><span style="left:500px">CRLF</span><span style="left:525px">Shell Script</span><span style="left:569px">☺</span><span style="left:586px">🔔</span></div>
</div>

<!-- PANEL 6 -->
<div class="p" style="left:1200px;top:337px">
<div class="tb"><svg style="position:absolute;left:5px;top:3px" width="11" height="11" viewBox="0 0 11 11"><path d="M8 0.5L10.5 1.7V9.3L8 10.5L2.5 5.5L8 0.5ZM8 3.2L5 5.5L8 7.8Z M0.5 3.5L1.5 3L4 5.5L1.5 8L0.5 7.5Z" fill="#3a9fe0"/></svg><span style="left:24px">File</span><span style="left:44px">Edit</span><span style="left:65px">Selection</span><span style="left:104px">View</span><span style="left:128px">Go</span><span style="left:147px">Run</span><span style="left:168px">Terminal</span><span style="left:204px">Help</span><span class="tt">3-rotate-keys.sh - Hashicorp-Certified-Vault-Associate-Vault-Management - Visual Studio Co...</span><span style="left:533px">—</span><span style="left:558px">❐</span><span style="left:585px">✕</span></div>
<svg class="ab" width="27" height="306" viewBox="0 17 27 306" fill="none" stroke="#8a8a8a" stroke-width="1.2"><rect x="0" y="20" width="1.5" height="20" fill="#fff" stroke="none"/><path d="M10 25h5l3 3v9h-8z M12 25v-3h5l3 3v9h-2" stroke="#dcdcdc"/><circle cx="14.5" cy="56" r="4"/><path d="M11.5 59l-4 4"/><circle cx="10" cy="81" r="1.8"/><circle cx="10" cy="92" r="1.8"/><circle cx="17" cy="84" r="1.8"/><path d="M10 83v7M17 86c0 3-7 3-7 4"/><path d="M11 110l9 7-9 7z M7 119h3v5h-3z"/><rect x="7" y="141" width="12" height="10"/><circle cx="17" cy="151" r="3"/><rect x="7" y="175" width="5" height="5"/><rect x="7" y="181" width="5" height="5"/><rect x="13" y="181" width="5" height="5"/><rect x="14" y="172" width="5" height="5"/><path d="M7 212l6-12 6 12z" fill="#8a8a8a"/><path d="M8 234h1M13 234h1M18 234h1" stroke-width="1.6"/><circle cx="13.5" cy="278" r="6.5"/><circle cx="13.5" cy="276" r="2.3"/><path d="M9 283c2-3 7-3 9 0"/><circle cx="13" cy="305" r="4"/><circle cx="13" cy="305" r="1.5"/><circle cx="18" cy="310" r="3" fill="#007acc" stroke="none"/></svg>
<div class="sb">
<div class="s" style="top:4px;left:11px;font-size:6.3px;color:#bbb">EXPLORER</div><div class="s" style="top:3px;left:84px;width:20px;color:#bbb">···</div>
<div class="s h" style="top:19px"><span class="c">⌄</span><span style="margin-left:11px">OPEN EDITORS</span></div>
<div class="s" style="top:32px;padding-left:22px"><span class="fi"></span>1-enable-transit-en...</div>
<div class="s" style="top:44px;padding-left:22px"><span class="fi"></span>2-encrypt-data.sh <span style="color:#888;font-size:6px">m6</span></div>
<div class="s sel" style="top:57px;padding-left:22px"><span class="c" style="left:8px">✕</span><span class="fi"></span>3-rotate-keys.sh <span style="color:#888;font-size:6px">m6</span></div>
<div class="s h" style="top:69px"><span class="c">⌄</span><span style="margin-left:11px">HASHICORP-CERTIFIED-VAU...</span></div>
<div class="s" style="top:82px;padding-left:19px;color:#8b8b8b"><span class="c" style="left:11px">›</span>certs</div>
<div class="s" style="top:94px;padding-left:19px"><span class="c" style="left:11px">›</span>m3</div>
<div class="s" style="top:106px;padding-left:19px"><span class="c" style="left:11px">›</span>m4</div>
<div class="s" style="top:118px;padding-left:19px"><span class="c" style="left:11px">›</span>m5</div>
<div class="s" style="top:131px;padding-left:19px"><span class="c" style="left:10px">⌄</span>m6</div>
<div class="s" style="top:143px;padding-left:15px"><span class="ps">›</span>1-enable-transit-engin...</div>
<div class="s" style="top:156px;padding-left:15px"><span class="fi"></span>1-enable-transit-engin...</div>
<div class="s" style="top:168px;padding-left:15px"><span class="ps">›</span>2-encrypt-data.ps1</div>
<div class="s" style="top:180px;padding-left:15px"><span class="fi"></span>2-encrypt-data.sh</div>
<div class="s" style="top:193px;padding-left:15px"><span class="ps">›</span>3-rotate-keys.ps1</div>
<div class="s sel" style="top:205px;padding-left:15px"><span class="fi"></span>3-rotate-keys.sh</div>
<div class="s" style="top:218px;padding-left:19px"><span class="c" style="left:11px">›</span>m7</div>
<div class="s" style="top:230px;padding-left:19px"><span class="c" style="left:11px">›</span>server1</div>
<div class="s" style="top:242px;padding-left:19px"><span style="color:#666;margin-right:2px">◦</span>.gitignore</div>
<div class="s" style="top:254px;padding-left:19px"><span style="color:#e0c040;margin-right:2px">▮</span>LICENSE</div>
<div class="s" style="top:267px;padding-left:19px"><span style="color:#519aba;margin-right:2px">ⓘ</span>README.md</div>
<div class="s h" style="top:282px;border-top:1px solid #3c3c3c"><span class="c">›</span><span style="margin-left:11px">OUTLINE</span></div>
<div class="s h" style="top:294px;border-top:1px solid #3c3c3c"><span class="c">›</span><span style="margin-left:11px">TIMELINE</span></div>
</div>
<div class="tabs"><div class="tab" style="left:0;width:115px;padding-left:7px"><span class="fi"></span>1-enable-transit-engine.sh</div><div class="tab" style="left:115px;width:95px;padding-left:11px"><span class="fi"></span>2-encrypt-data.sh</div><div class="tab a" style="left:210px;width:85px;padding-left:8px"><span class="fi"></span>3-rotate-keys.sh <span style="margin-left:2px">✕</span></div><div class="tab" style="left:410px;background:none;color:#aaa;font-size:8px">⧉ &nbsp;◫ &nbsp;···</div></div>
<div class="bc">m6 › <span class="fi"></span>3-rotate-keys.sh</div>
<div class="ed"><div class="ei" style="top:7.3px">
<div class="l"><i>10</i><b class="cm"># If we try and encrypt a new piece of data, it will use the new key</b></div>
<div class="l"><i>11</i><b>vault write transit/encrypt/ccid plaintext=<span class="sr">$(base64 &lt;&lt;&lt; "4444123412341234")</span></b></div>
<div class="l"><i>12</i><b></b></div>
<div class="l"><i>13</i><b class="cm"># Let's rotate the key a few more times</b></div>
<div class="l"><i>14</i><b>vault write -force transit/keys/ccid/rotate</b></div>
<div class="l"><i>15</i><b></b></div>
<div class="l"><i>16</i><b class="cm"># And we'll set the minimum version availble to <span class="hs">2</span></b></div>
<div class="l" style="outline:1px solid #282828"><i class="cur">17</i><b>vault write transit/keys/ccid/config min_decryption_version=<span class="hs">2</span>|</b></div>
<div class="l"><i>18</i><b></b></div>
</div></div>
<div class="pn"><span class="pt" style="left:10px">PROBLEMS</span><span class="pt" style="left:52px">OUTPUT</span><span class="pt" style="left:86px;color:#e7e7e7;border-bottom:1px solid #e7e7e7;padding-bottom:2px">TERMINAL</span><span class="pt" style="left:126px">DEBUG CONSOLE</span><div class="dd">1: wsl<span style="position:absolute;right:5px">⌄</span></div><span class="pt" style="left:379px;font-size:10px;top:1px;color:#ccc">+ &nbsp;◫ &nbsp;🗑 &nbsp;˄ &nbsp;✕</span></div>
<div class="tm">
derived                  false
exportable               false
keys                     map[1:1617648417 2:1617649110 3:1617649224 4:1617649224 5:1617649225 6:161764922
6]
latest_version           6
min_available_version    0
min_decryption_version   1
min_encryption_version   0
name                     ccid
supports_decryption      true
supports_derivation      true
supports_encryption      true
supports_signing         false
type                     aes256-gcm96
m6 $<span class="cu"></span></div>
<svg class="arr" width="600" height="337"><circle cx="576" cy="314" r="10" fill="#2a2a2a"/></svg>
<div class="st"><div class="rm" style="position:absolute"></div><span style="left:4px">⚡</span><span style="left:24px">⎇ main</span><span style="left:58px">⟳</span><span style="left:73px">⊗ 0 ⚠ 0</span><span style="left:112px">▣ shellscript | ✓ 3-rotate-keys.sh</span><span style="left:390px">Ln 17, Col 62</span><span style="left:438px">Spaces: 4</span><span style="left:474px">UTF-8</span><span style="left:500px">CRLF</span><span style="left:525px">Shell Script</span><span style="left:569px">☺</span><span style="left:586px">🔔</span></div>
</div>

<!-- PANEL 7 -->
<div class="p" style="left:0;top:674px">
<div class="tb"><svg style="position:absolute;left:5px;top:3px" width="11" height="11" viewBox="0 0 11 11"><path d="M8 0.5L10.5 1.7V9.3L8 10.5L2.5 5.5L8 0.5ZM8 3.2L5 5.5L8 7.8Z M0.5 3.5L1.5 3L4 5.5L1.5 8L0.5 7.5Z" fill="#3a9fe0"/></svg><span style="left:24px">File</span><span style="left:44px">Edit</span><span style="left:65px">Selection</span><span style="left:104px">View</span><span style="left:128px">Go</span><span style="left:147px">Run</span><span style="left:168px">Terminal</span><span style="left:204px">Help</span><span class="tt">3-rotate-keys.sh - Hashicorp-Certified-Vault-Associate-Vault-Management - Visual Studio Co...</span><span style="left:533px">—</span><span style="left:558px">❐</span><span style="left:585px">✕</span></div>
<svg class="ab" width="27" height="306" viewBox="0 17 27 306" fill="none" stroke="#8a8a8a" stroke-width="1.2"><rect x="0" y="20" width="1.5" height="20" fill="#fff" stroke="none"/><path d="M10 25h5l3 3v9h-8z M12 25v-3h5l3 3v9h-2" stroke="#dcdcdc"/><circle cx="14.5" cy="56" r="4"/><path d="M11.5 59l-4 4"/><circle cx="10" cy="81" r="1.8"/><circle cx="10" cy="92" r="1.8"/><circle cx="17" cy="84" r="1.8"/><path d="M10 83v7M17 86c0 3-7 3-7 4"/><path d="M11 110l9 7-9 7z M7 119h3v5h-3z"/><rect x="7" y="141" width="12" height="10"/><circle cx="17" cy="151" r="3"/><rect x="7" y="175" width="5" height="5"/><rect x="7" y="181" width="5" height="5"/><rect x="13" y="181" width="5" height="5"/><rect x="14" y="172" width="5" height="5"/><path d="M7 212l6-12 6 12z" fill="#8a8a8a"/><path d="M8 234h1M13 234h1M18 234h1" stroke-width="1.6"/><circle cx="13.5" cy="278" r="6.5"/><circle cx="13.5" cy="276" r="2.3"/><path d="M9 283c2-3 7-3 9 0"/><circle cx="13" cy="305" r="4"/><circle cx="13" cy="305" r="1.5"/><circle cx="18" cy="310" r="3" fill="#007acc" stroke="none"/></svg>
<div class="sb">
<div class="s" style="top:4px;left:11px;font-size:6.3px;color:#bbb">EXPLORER</div><div class="s" style="top:3px;left:84px;width:20px;color:#bbb">···</div>
<div class="s h" style="top:19px"><span class="c">⌄</span><span style="margin-left:11px">OPEN EDITORS</span></div>
<div class="s" style="top:32px;padding-left:22px"><span class="fi"></span>1-enable-transit-en...</div>
<div class="s" style="top:44px;padding-left:22px"><span class="fi"></span>2-encrypt-data.sh <span style="color:#888;font-size:6px">m6</span></div>
<div class="s sel" style="top:57px;padding-left:22px"><span class="c" style="left:8px">✕</span><span class="fi"></span>3-rotate-keys.sh <span style="color:#888;font-size:6px">m6</span></div>
<div class="s h" style="top:69px"><span class="c">⌄</span><span style="margin-left:11px">HASHICORP-CERTIFIED-VAU...</span></div>
<div class="s" style="top:82px;padding-left:19px;color:#8b8b8b"><span class="c" style="left:11px">›</span>certs</div>
<div class="s" style="top:94px;padding-left:19px"><span class="c" style="left:11px">›</span>m3</div>
<div class="s" style="top:106px;padding-left:19px"><span class="c" style="left:11px">›</span>m4</div>
<div class="s" style="top:118px;padding-left:19px"><span class="c" style="left:11px">›</span>m5</div>
<div class="s" style="top:131px;padding-left:19px"><span class="c" style="left:10px">⌄</span>m6</div>
<div class="s" style="top:143px;padding-left:15px"><span class="ps">›</span>1-enable-transit-engin...</div>
<div class="s" style="top:156px;padding-left:15px"><span class="fi"></span>1-enable-transit-engin...</div>
<div class="s" style="top:168px;padding-left:15px"><span class="ps">›</span>2-encrypt-data.ps1</div>
<div class="s" style="top:180px;padding-left:15px"><span class="fi"></span>2-encrypt-data.sh</div>
<div class="s" style="top:193px;padding-left:15px"><span class="ps">›</span>3-rotate-keys.ps1</div>
<div class="s sel" style="top:205px;padding-left:15px"><span class="fi"></span>3-rotate-keys.sh</div>
<div class="s" style="top:218px;padding-left:19px"><span class="c" style="left:11px">›</span>m7</div>
<div class="s" style="top:230px;padding-left:19px"><span class="c" style="left:11px">›</span>server1</div>
<div class="s" style="top:242px;padding-left:19px"><span style="color:#666;margin-right:2px">◦</span>.gitignore</div>
<div class="s" style="top:254px;padding-left:19px"><span style="color:#e0c040;margin-right:2px">▮</span>LICENSE</div>
<div class="s" style="top:267px;padding-left:19px"><span style="color:#519aba;margin-right:2px">ⓘ</span>README.md</div>
<div class="s h" style="top:282px;border-top:1px solid #3c3c3c"><span class="c">›</span><span style="margin-left:11px">OUTLINE</span></div>
<div class="s h" style="top:294px;border-top:1px solid #3c3c3c"><span class="c">›</span><span style="margin-left:11px">TIMELINE</span></div>
</div>
<div class="tabs"><div class="tab" style="left:0;width:115px;padding-left:7px"><span class="fi"></span>1-enable-transit-engine.sh</div><div class="tab" style="left:115px;width:95px;padding-left:11px"><span class="fi"></span>2-encrypt-data.sh</div><div class="tab a" style="left:210px;width:85px;padding-left:8px"><span class="fi"></span>3-rotate-keys.sh <span style="margin-left:2px">✕</span></div><div class="tab" style="left:410px;background:none;color:#aaa;font-size:8px">⧉ &nbsp;◫ &nbsp;···</div></div>
<div class="bc">m6 › <span class="fi"></span>3-rotate-keys.sh</div>
<div class="ed"><div class="ei" style="top:7.3px">
<div class="l"><i>10</i><b class="cm"># If we try and encrypt a new piece of data, it will use the new key</b></div>
<div class="l"><i>11</i><b>vault write transit/encrypt/ccid plaintext=<span class="sr">$(base64 &lt;&lt;&lt; "4444123412341234")</span></b></div>
<div class="l"><i>12</i><b></b></div>
<div class="l"><i>13</i><b class="cm"># Let's rotate the key a few more times</b></div>
<div class="l"><i>14</i><b>vault write -force transit/keys/ccid/rotate</b></div>
<div class="l"><i>15</i><b></b></div>
<div class="l"><i>16</i><b class="cm"># And we'll set the minimum version availble to 2</b></div>
<div class="l"><i class="cur">17</i><b><span class="hg">vault write transit/keys/ccid/config min_decryption_version=2</span></b></div>
<div class="l"><i>18</i><b></b></div>
</div></div>
<div class="pn"><span class="pt" style="left:10px">PROBLEMS</span><span class="pt" style="left:52px">OUTPUT</span><span class="pt" style="left:86px;color:#e7e7e7;border-bottom:1px solid #e7e7e7;padding-bottom:2px">TERMINAL</span><span class="pt" style="left:126px">DEBUG CONSOLE</span><div class="dd">1: wsl<span style="position:absolute;right:5px">⌄</span></div><span class="pt" style="left:379px;font-size:10px;top:1px;color:#ccc">+ &nbsp;◫ &nbsp;🗑 &nbsp;˄ &nbsp;✕</span></div>
<div class="tm">
deletion_allowed         false
derived                  false
exportable               false
keys                     map[2:1617649110 3:1617649224 4:1617649224 5:1617649225 6:1617649226]
latest_version           6
min_available_version    0
min_decryption_version   2
min_encryption_version   0
name                     ccid
supports_decryption      true
supports_derivation      true
supports_encryption      true
supports_signing         false
type                     aes256-gcm96
m6 $<span class="cu" style="background:#ccc"></span></div>
<svg class="arr" width="600" height="337"><circle cx="576" cy="314" r="10" fill="#2a2a2a"/><polygon points="75,238.5 121,238.5 121,235 135,242 121,249 121,245.5 75,245.5" fill="#e5432a"/></svg>
<div class="st"><div class="rm" style="position:absolute"></div><span style="left:4px">⚡</span><span style="left:24px">⎇ main</span><span style="left:58px">⟳</span><span style="left:73px">⊗ 0 ⚠ 0</span><span style="left:112px">▣ shellscript | ✓ 3-rotate-keys.sh</span><span style="left:356px">Ln 17, Col 1 (61 selected)</span><span style="left:438px">Spaces: 4</span><span style="left:474px">UTF-8</span><span style="left:500px">CRLF</span><span style="left:525px">Shell Script</span><span style="left:569px">☺</span><span style="left:586px">🔔</span></div>
</div>

<!-- PANEL 8 -->
<div class="p" style="left:600px;top:674px">
<div class="tb"><svg style="position:absolute;left:5px;top:3px" width="11" height="11" viewBox="0 0 11 11"><path d="M8 0.5L10.5 1.7V9.3L8 10.5L2.5 5.5L8 0.5ZM8 3.2L5 5.5L8 7.8Z M0.5 3.5L1.5 3L4 5.5L1.5 8L0.5 7.5Z" fill="#3a9fe0"/></svg><span style="left:24px">File</span><span style="left:44px">Edit</span><span style="left:65px">Selection</span><span style="left:104px">View</span><span style="left:128px">Go</span><span style="left:147px">Run</span><span style="left:168px">Terminal</span><span style="left:204px">Help</span><span class="tt">3-rotate-keys.sh - Hashicorp-Certified-Vault-Associate-Vault-Management - Visual Studio Co...</span><span style="left:533px">—</span><span style="left:558px">❐</span><span style="left:585px">✕</span></div>
<svg class="ab" width="27" height="306" viewBox="0 17 27 306" fill="none" stroke="#8a8a8a" stroke-width="1.2"><rect x="0" y="20" width="1.5" height="20" fill="#fff" stroke="none"/><path d="M10 25h5l3 3v9h-8z M12 25v-3h5l3 3v9h-2" stroke="#dcdcdc"/><circle cx="14.5" cy="56" r="4"/><path d="M11.5 59l-4 4"/><circle cx="10" cy="81" r="1.8"/><circle cx="10" cy="92" r="1.8"/><circle cx="17" cy="84" r="1.8"/><path d="M10 83v7M17 86c0 3-7 3-7 4"/><path d="M11 110l9 7-9 7z M7 119h3v5h-3z"/><rect x="7" y="141" width="12" height="10"/><circle cx="17" cy="151" r="3"/><rect x="7" y="175" width="5" height="5"/><rect x="7" y="181" width="5" height="5"/><rect x="13" y="181" width="5" height="5"/><rect x="14" y="172" width="5" height="5"/><path d="M7 212l6-12 6 12z" fill="#8a8a8a"/><path d="M8 234h1M13 234h1M18 234h1" stroke-width="1.6"/><circle cx="13.5" cy="278" r="6.5"/><circle cx="13.5" cy="276" r="2.3"/><path d="M9 283c2-3 7-3 9 0"/><circle cx="13" cy="305" r="4"/><circle cx="13" cy="305" r="1.5"/><circle cx="18" cy="310" r="3" fill="#007acc" stroke="none"/></svg>
<div class="sb">
<div class="s" style="top:4px;left:11px;font-size:6.3px;color:#bbb">EXPLORER</div><div class="s" style="top:3px;left:84px;width:20px;color:#bbb">···</div>
<div class="s h" style="top:19px"><span class="c">⌄</span><span style="margin-left:11px">OPEN EDITORS</span></div>
<div class="s" style="top:32px;padding-left:22px"><span class="fi"></span>1-enable-transit-en...</div>
<div class="s" style="top:44px;padding-left:22px"><span class="fi"></span>2-encrypt-data.sh <span style="color:#888;font-size:6px">m6</span></div>
<div class="s sel" style="top:57px;padding-left:22px"><span class="c" style="left:8px">✕</span><span class="fi"></span>3-rotate-keys.sh <span style="color:#888;font-size:6px">m6</span></div>
<div class="s h" style="top:69px"><span class="c">⌄</span><span style="margin-left:11px">HASHICORP-CERTIFIED-VAU...</span></div>
<div class="s" style="top:82px;padding-left:19px;color:#8b8b8b"><span class="c" style="left:11px">›</span>certs</div>
<div class="s" style="top:94px;padding-left:19px"><span class="c" style="left:11px">›</span>m3</div>
<div class="s" style="top:106px;padding-left:19px"><span class="c" style="left:11px">›</span>m4</div>
<div class="s" style="top:118px;padding-left:19px"><span class="c" style="left:11px">›</span>m5</div>
<div class="s" style="top:131px;padding-left:19px"><span class="c" style="left:10px">⌄</span>m6</div>
<div class="s" style="top:143px;padding-left:15px"><span class="ps">›</span>1-enable-transit-engin...</div>
<div class="s" style="top:156px;padding-left:15px"><span class="fi"></span>1-enable-transit-engin...</div>
<div class="s" style="top:168px;padding-left:15px"><span class="ps">›</span>2-encrypt-data.ps1</div>
<div class="s" style="top:180px;padding-left:15px"><span class="fi"></span>2-encrypt-data.sh</div>
<div class="s" style="top:193px;padding-left:15px"><span class="ps">›</span>3-rotate-keys.ps1</div>
<div class="s sel" style="top:205px;padding-left:15px"><span class="fi"></span>3-rotate-keys.sh</div>
<div class="s" style="top:218px;padding-left:19px"><span class="c" style="left:11px">›</span>m7</div>
<div class="s" style="top:230px;padding-left:19px"><span class="c" style="left:11px">›</span>server1</div>
<div class="s" style="top:242px;padding-left:19px"><span style="color:#666;margin-right:2px">◦</span>.gitignore</div>
<div class="s" style="top:254px;padding-left:19px"><span style="color:#e0c040;margin-right:2px">▮</span>LICENSE</div>
<div class="s" style="top:267px;padding-left:19px"><span style="color:#519aba;margin-right:2px">ⓘ</span>README.md</div>
<div class="s h" style="top:282px;border-top:1px solid #3c3c3c"><span class="c">›</span><span style="margin-left:11px">OUTLINE</span></div>
<div class="s h" style="top:294px;border-top:1px solid #3c3c3c"><span class="c">›</span><span style="margin-left:11px">TIMELINE</span></div>
</div>
<div class="tabs"><div class="tab" style="left:0;width:115px;padding-left:7px"><span class="fi"></span>1-enable-transit-engine.sh</div><div class="tab" style="left:115px;width:95px;padding-left:11px"><span class="fi"></span>2-encrypt-data.sh</div><div class="tab a" style="left:210px;width:85px;padding-left:8px"><span class="fi"></span>3-rotate-keys.sh <span style="margin-left:2px">✕</span></div><div class="tab" style="left:410px;background:none;color:#aaa;font-size:8px">⧉ &nbsp;◫ &nbsp;···</div></div>
<div class="bc">m6 › <span class="fi"></span>3-rotate-keys.sh</div>
<div class="ed"><div class="ei" style="top:4px">
<div class="l"><i>15</i><b></b></div>
<div class="l"><i>16</i><b class="cm"># And we'll set the minimum version availble to 2</b></div>
<div class="l"><i>17</i><b>vault write transit/keys/ccid/config min_decryption_version=2</b></div>
<div class="l"><i>18</i><b></b></div>
<div class="l"><i>19</i><b class="cm"># If we try and decrypt our old ciphertext now, we'll get an error</b></div>
<div class="l"><i class="cur">20</i><b><span class="hl">vault write transit/decrypt/ccid ciphertext=<span class="vr">$ciphertext</span></span></b></div>
<div class="l"><i>21</i><b></b></div>
<div class="l"><i>22</i><b class="cm"># The key is still there</b></div>
<div class="l"><i>23</i><b>vault read transit/keys/ccid</b></div>
</div></div>
<div class="pn"><span class="pt" style="left:10px">PROBLEMS</span><span class="pt" style="left:52px">OUTPUT</span><span class="pt" style="left:86px;color:#e7e7e7;border-bottom:1px solid #e7e7e7;padding-bottom:2px">TERMINAL</span><span class="pt" style="left:126px">DEBUG CONSOLE</span><div class="dd">1: wsl<span style="position:absolute;right:5px">⌄</span></div><span class="pt" style="left:379px;font-size:10px;top:1px;color:#ccc">+ &nbsp;◫ &nbsp;🗑 &nbsp;˄ &nbsp;✕</span></div>
<div class="tm">
min_encryption_version   0
name                     ccid
supports_decryption      true
supports_derivation      true
supports_encryption      true
supports_signing         false
type                     aes256-gcm96
m6 $vault write transit/decrypt/ccid ciphertext=$ciphertext
<span class="er">Error writing data to transit/decrypt/ccid: Error making API request.</span>

<span class="er">URL: PUT https://127.0.0.1:8200/v1/transit/decrypt/ccid</span>
<span class="er">Code: 400. Errors:</span>

<span class="er">* ciphertext or signature version is disallowed by policy (too old)</span>
m6 $<span class="cu"></span></div>
<svg class="arr" width="600" height="337"><circle cx="576" cy="314" r="10" fill="#2a2a2a"/></svg>
<div class="st"><div class="rm" style="position:absolute"></div><span style="left:4px">⚡</span><span style="left:24px">⎇ main</span><span style="left:58px">⟳</span><span style="left:73px">⊗ 0 ⚠ 0</span><span style="left:112px">▣ shellscript | ✓ 3-rotate-keys.sh</span><span style="left:356px">Ln 20, Col 1 (55 selected)</span><span style="left:438px">Spaces: 4</span><span style="left:474px">UTF-8</span><span style="left:500px">CRLF</span><span style="left:525px">Shell Script</span><span style="left:569px">☺</span><span style="left:586px">🔔</span></div>
</div>

<!-- PANEL 9 -->
<div class="p" style="left:1200px;top:674px">
<div class="tb"><svg style="position:absolute;left:5px;top:3px" width="11" height="11" viewBox="0 0 11 11"><path d="M8 0.5L10.5 1.7V9.3L8 10.5L2.5 5.5L8 0.5ZM8 3.2L5 5.5L8 7.8Z M0.5 3.5L1.5 3L4 5.5L1.5 8L0.5 7.5Z" fill="#3a9fe0"/></svg><span style="left:24px">File</span><span style="left:44px">Edit</span><span style="left:65px">Selection</span><span style="left:104px">View</span><span style="left:128px">Go</span><span style="left:147px">Run</span><span style="left:168px">Terminal</span><span style="left:204px">Help</span><span class="tt">3-rotate-keys.sh - Hashicorp-Certified-Vault-Associate-Vault-Management - Visual Studio Co...</span><span style="left:533px">—</span><span style="left:558px">❐</span><span style="left:585px">✕</span></div>
<svg class="ab" width="27" height="306" viewBox="0 17 27 306" fill="none" stroke="#8a8a8a" stroke-width="1.2"><rect x="0" y="20" width="1.5" height="20" fill="#fff" stroke="none"/><path d="M10 25h5l3 3v9h-8z M12 25v-3h5l3 3v9h-2" stroke="#dcdcdc"/><circle cx="14.5" cy="56" r="4"/><path d="M11.5 59l-4 4"/><circle cx="10" cy="81" r="1.8"/><circle cx="10" cy="92" r="1.8"/><circle cx="17" cy="84" r="1.8"/><path d="M10 83v7M17 86c0 3-7 3-7 4"/><path d="M11 110l9 7-9 7z M7 119h3v5h-3z"/><rect x="7" y="141" width="12" height="10"/><circle cx="17" cy="151" r="3"/><rect x="7" y="175" width="5" height="5"/><rect x="7" y="181" width="5" height="5"/><rect x="13" y="181" width="5" height="5"/><rect x="14" y="172" width="5" height="5"/><path d="M7 212l6-12 6 12z" fill="#8a8a8a"/><path d="M8 234h1M13 234h1M18 234h1" stroke-width="1.6"/><circle cx="13.5" cy="278" r="6.5"/><circle cx="13.5" cy="276" r="2.3"/><path d="M9 283c2-3 7-3 9 0"/><circle cx="13" cy="305" r="4"/><circle cx="13" cy="305" r="1.5"/><circle cx="18" cy="310" r="3" fill="#007acc" stroke="none"/></svg>
<div class="sb">
<div class="s" style="top:4px;left:11px;font-size:6.3px;color:#bbb">EXPLORER</div><div class="s" style="top:3px;left:84px;width:20px;color:#bbb">···</div>
<div class="s h" style="top:19px"><span class="c">⌄</span><span style="margin-left:11px">OPEN EDITORS</span></div>
<div class="s" style="top:32px;padding-left:22px"><span class="fi"></span>1-enable-transit-en...</div>
<div class="s" style="top:44px;padding-left:22px"><span class="fi"></span>2-encrypt-data.sh <span style="color:#888;font-size:6px">m6</span></div>
<div class="s sel" style="top:57px;padding-left:22px"><span class="c" style="left:8px">✕</span><span class="fi"></span>3-rotate-keys.sh <span style="color:#888;font-size:6px">m6</span></div>
<div class="s h" style="top:69px"><span class="c">⌄</span><span style="margin-left:11px">HASHICORP-CERTIFIED-VAU...</span></div>
<div class="s" style="top:82px;padding-left:19px;color:#8b8b8b"><span class="c" style="left:11px">›</span>certs</div>
<div class="s" style="top:94px;padding-left:19px"><span class="c" style="left:11px">›</span>m3</div>
<div class="s" style="top:106px;padding-left:19px"><span class="c" style="left:11px">›</span>m4</div>
<div class="s" style="top:118px;padding-left:19px"><span class="c" style="left:11px">›</span>m5</div>
<div class="s" style="top:131px;padding-left:19px"><span class="c" style="left:10px">⌄</span>m6</div>
<div class="s" style="top:143px;padding-left:15px"><span class="ps">›</span>1-enable-transit-engin...</div>
<div class="s" style="top:156px;padding-left:15px"><span class="fi"></span>1-enable-transit-engin...</div>
<div class="s" style="top:168px;padding-left:15px"><span class="ps">›</span>2-encrypt-data.ps1</div>
<div class="s" style="top:180px;padding-left:15px"><span class="fi"></span>2-encrypt-data.sh</div>
<div class="s" style="top:193px;padding-left:15px"><span class="ps">›</span>3-rotate-keys.ps1</div>
<div class="s sel" style="top:205px;padding-left:15px"><span class="fi"></span>3-rotate-keys.sh</div>
<div class="s" style="top:218px;padding-left:19px"><span class="c" style="left:11px">›</span>m7</div>
<div class="s" style="top:230px;padding-left:19px"><span class="c" style="left:11px">›</span>server1</div>
<div class="s" style="top:242px;padding-left:19px"><span style="color:#666;margin-right:2px">◦</span>.gitignore</div>
<div class="s" style="top:254px;padding-left:19px"><span style="color:#e0c040;margin-right:2px">▮</span>LICENSE</div>
<div class="s" style="top:267px;padding-left:19px"><span style="color:#519aba;margin-right:2px">ⓘ</span>README.md</div>
<div class="s h" style="top:282px;border-top:1px solid #3c3c3c"><span class="c">›</span><span style="margin-left:11px">OUTLINE</span></div>
<div class="s h" style="top:294px;border-top:1px solid #3c3c3c"><span class="c">›</span><span style="margin-left:11px">TIMELINE</span></div>
</div>
<div class="tabs"><div class="tab" style="left:0;width:115px;padding-left:7px"><span class="fi"></span>1-enable-transit-engine.sh</div><div class="tab" style="left:115px;width:95px;padding-left:11px"><span class="fi"></span>2-encrypt-data.sh</div><div class="tab a" style="left:210px;width:85px;padding-left:8px"><span class="fi"></span>3-rotate-keys.sh <span style="margin-left:2px">✕</span></div><div class="tab" style="left:410px;background:none;color:#aaa;font-size:8px">⧉ &nbsp;◫ &nbsp;···</div></div>
<div class="bc">m6 › <span class="fi"></span>3-rotate-keys.sh</div>
<div class="ed"><div class="ei" style="top:-2.3px">
<div class="l"><i>17</i><b>vault write transit/keys/ccid/config min_decryption_version=2</b></div>
<div class="l"><i>18</i><b></b></div>
<div class="l"><i>19</i><b class="cm"># If we try and decrypt our old ciphertext now, we'll get an error</b></div>
<div class="l"><i class="cur">20</i><b><span class="hl">vault write transit/decrypt/ccid ciphertext=<span class="vr">$ciphertext</span></span></b></div>
<div class="l"><i>21</i><b></b></div>
<div class="l"><i>22</i><b class="cm"># The key is still there</b></div>
<div class="l"><i>23</i><b>vault read transit/keys/ccid</b></div>
<div class="l"><i>24</i><b></b></div>
<div class="l"><i>25</i><b class="cm"># If we want to purge an older key, we need to set the min encryption version</b></div>
<div class="l"><i>26</i><b class="cm"># and then we can trim the keys</b></div>
</div></div>
<div class="pn"><span class="pt" style="left:10px">PROBLEMS</span><span class="pt" style="left:52px">OUTPUT</span><span class="pt" style="left:86px;color:#e7e7e7;border-bottom:1px solid #e7e7e7;padding-bottom:2px">TERMINAL</span><span class="pt" style="left:126px">DEBUG CONSOLE</span><div class="dd">1: wsl<span style="position:absolute;right:5px">⌄</span></div><span class="pt" style="left:379px;font-size:10px;top:1px;color:#ccc">+ &nbsp;◫ &nbsp;🗑 &nbsp;˄ &nbsp;✕</span></div>
<div class="tm">
min_encryption_version   0
name                     ccid
supports_decryption      true
supports_derivation      true
supports_encryption      true
supports_signing         false
type                     aes256-gcm96
m6 $vault write transit/decrypt/ccid ciphertext=$ciphertext
<span class="er">Error writing data to transit/decrypt/ccid: Error making API request.</span>

<span class="er">URL: PUT https://127.0.0.1:8200/v1/transit/decrypt/ccid</span>
<span class="er">Code: 400. Errors:</span>

<span class="er">* ciphertext or signature version is disallowed by policy (too old)</span>
m6 $<span class="cu"></span></div>
<svg class="arr" width="600" height="337"><circle cx="576" cy="314" r="10" fill="#2a2a2a"/></svg>
<div class="st"><div class="rm" style="position:absolute"></div><span style="left:4px">⚡</span><span style="left:24px">⎇ main</span><span style="left:58px">⟳</span><span style="left:73px">⊗ 0 ⚠ 0</span><span style="left:112px">▣ shellscript | ✓ 3-rotate-keys.sh</span><span style="left:356px">Ln 20, Col 1 (55 selected)</span><span style="left:438px">Spaces: 4</span><span style="left:474px">UTF-8</span><span style="left:500px">CRLF</span><span style="left:525px">Shell Script</span><span style="left:569px">☺</span><span style="left:586px">🔔</span></div>
</div>

</body></html>
